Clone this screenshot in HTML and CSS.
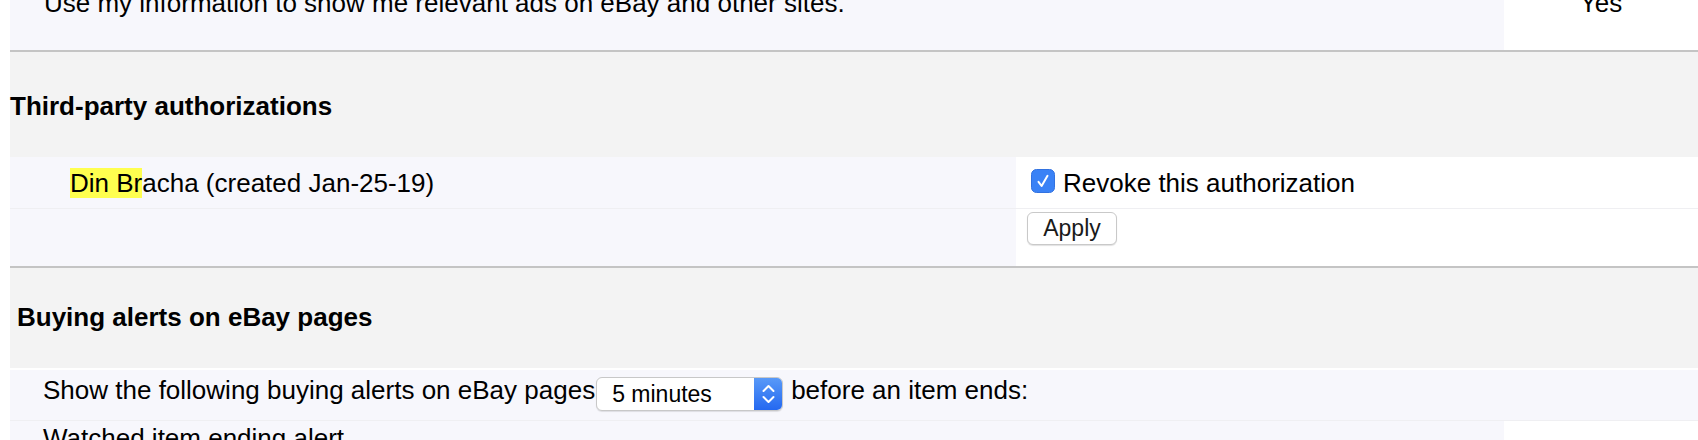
FILE: index.html
```html
<!DOCTYPE html>
<html lang="en">
<head>
<meta charset="utf-8">
<title>Preferences</title>
<link rel="stylesheet" href="styles.css">
</head>
<body>
<div class="page">
  <div class="row row-top">
    <div class="cell main"><div class="txt">Use my information to show me relevant ads on eBay and other sites.</div></div>
    <div class="cell side"><div class="txt">Yes</div></div>
  </div>
  <div class="rule"></div>
  <div class="section-head head-auth">Third-party authorizations</div>
  <div class="row auth-row sep">
    <div class="cell name"><span class="hl">Din Br</span>acha (created Jan-25-19)</div>
    <div class="cell action">
      <label class="check">
        <span class="box"><svg width="24" height="24" viewBox="0 0 24 24"><rect x="0.5" y="0.5" width="23" height="23" rx="5" fill="#3a82f6" stroke="#3272e0"/><path d="M7.5 12.8 L10.6 17 L16.5 6.8" fill="none" stroke="#fff" stroke-width="2" stroke-linecap="round" stroke-linejoin="round"/></svg></span>
        <span>Revoke this authorization</span>
      </label>
    </div>
  </div>
  <div class="row apply-row">
    <div class="cell name"></div>
    <div class="cell action"><button class="btn" type="button">Apply</button></div>
  </div>
  <div class="rule"></div>
  <div class="section-head head-alerts">Buying alerts on eBay pages</div>
  <div class="gap"></div>
  <div class="row alert-row sep">
    <span class="txt">Show the following buying alerts on eBay pages</span>
    <span class="select"><span class="select-label">5 minutes</span><span class="stepper"><svg width="29" height="34" viewBox="0 0 29 34"><path d="M9.5 14 L14.5 9 L19.5 14 M9.5 20 L14.5 25 L19.5 20" fill="none" stroke="#fff" stroke-width="2" stroke-linecap="round" stroke-linejoin="round"/></svg></span></span>
    <span class="txt after">before an item ends:</span>
  </div>
  <div class="row watched-row">
    <div class="cell main2"><div class="txt">Watched item ending alert</div></div>
    <div class="cell side"></div>
  </div>
</div>
</body>
</html>
```

FILE: styles.css
```css
html, body {
  margin: 0;
  padding: 0;
  background: #ffffff;
}

body {
  font-family: "Liberation Sans", Arial, Helvetica, sans-serif;
  font-size: 26px;
  color: #000;
  overflow: hidden;
}

.page {
  margin-left: 10px;
  width: 1688px;
}

.row {
  display: flex;
}

.cell {
  box-sizing: border-box;
}

.txt {
  line-height: 30px;
  white-space: nowrap;
}

/* top row */
.row-top {
  height: 50px;
}
.row-top .txt {
  margin-top: -12px;
}
.main {
  width: 1494px;
  background: #f7f7fc;
  padding-left: 34px;
}
.side {
  flex: 1;
  background: #ffffff;
  text-align: center;
}

.rule {
  height: 2px;
  background: #c4c4c4;
}

.section-head {
  background: #f3f3f3;
  font-weight: bold;
  line-height: 30px;
  white-space: nowrap;
}
.head-auth {
  padding: 39px 0 36px 0;
}
.head-alerts {
  padding: 34px 0 36px 7px;
}

.sep {
  border-bottom: 1px solid #efeff2;
}

/* authorizations */
.name {
  width: 1006px;
  background: #f7f7fc;
  padding-left: 60px;
  line-height: 30px;
  white-space: nowrap;
}
.action {
  flex: 1;
  background: #ffffff;
  padding-left: 16px;
}
.auth-row .name,
.auth-row .action {
  padding-top: 11px;
  padding-bottom: 10px;
}
.auth-row .action {
  padding-left: 15px;
}
.hl {
  background: #ffff4f;
}
.check {
  display: flex;
  align-items: center;
  gap: 8px;
  line-height: 30px;
  white-space: nowrap;
}
.box {
  display: block;
  width: 24px;
  height: 24px;
  margin-top: -5px;
}
.box svg {
  display: block;
}

.apply-row {
  height: 57px;
}
.apply-row .action {
  padding-left: 11px;
  padding-top: 2px;
}
.btn {
  box-sizing: border-box;
  width: 90px;
  height: 33px;
  margin-top: 1px;
  padding: 0;
  border: 1px solid #c9c9c9;
  border-radius: 6px;
  background: #ffffff;
  box-shadow: 0 1px 1px rgba(0, 0, 0, 0.12);
  font-family: "Liberation Sans", Arial, Helvetica, sans-serif;
  font-size: 23px;
  color: #1a1a1a;
  line-height: 31px;
}

.gap {
  height: 2px;
  background: #ffffff;
}

/* alerts */
.alert-row {
  background: #f7f7fc;
  padding-left: 33px;
  padding-top: 7px;
  height: 43px;
  align-items: flex-start;
}
.alert-row .txt {
  margin-top: -2px;
}
.alert-row .after {
  margin-left: 8px;
}
.select {
  box-sizing: border-box;
  display: flex;
  width: 187px;
  height: 34px;
  margin-left: 1px;
  border: 1px solid #c8c8c8;
  border-radius: 6px;
  background: #ffffff;
  box-shadow: 0 1px 1px rgba(0, 0, 0, 0.1);
  overflow: hidden;
}
.select-label {
  flex: 1;
  padding-left: 15px;
  font-size: 23px;
  line-height: 32px;
  white-space: nowrap;
}
.stepper {
  width: 29px;
  height: 34px;
  margin: -1px -1px -1px 0;
  background: linear-gradient(#5a9bf8, #2367f0);
}
.stepper svg {
  display: block;
}

.watched-row {
  height: 40px;
}
.main2 {
  width: 1494px;
  background: #f7f7fc;
  padding-left: 33px;
  padding-top: 2px;
}
```
